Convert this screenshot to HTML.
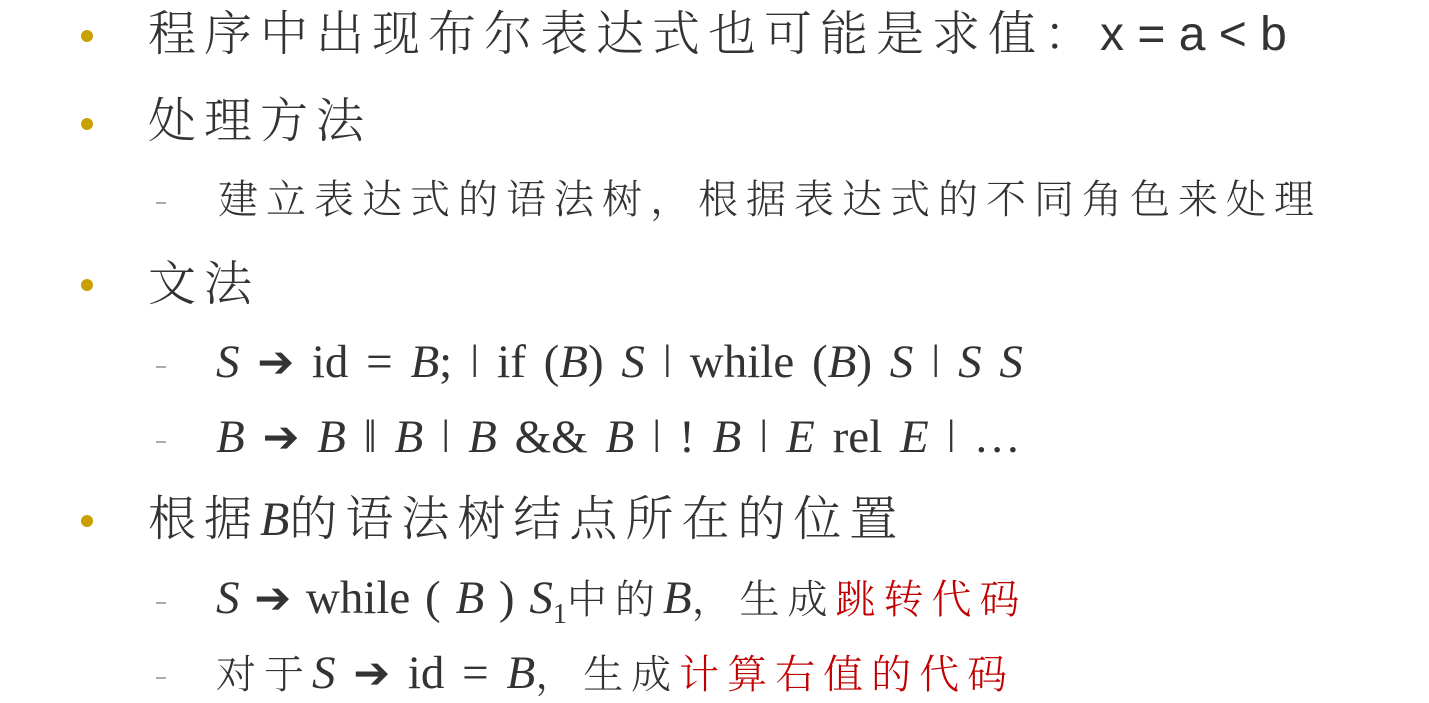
<!DOCTYPE html>
<html><head><meta charset="utf-8"><style>
body{margin:0;width:1429px;height:703px;background:#fff;overflow:hidden;color:#333;font-family:"Liberation Serif","Noto Serif CJK SC",serif;}
.l{position:absolute;white-space:nowrap;line-height:1;}
.b{position:absolute;width:12px;height:12px;border-radius:50%;background:#c9a000;}
.d{position:absolute;width:10px;height:2px;background:#aaa;}
.m{font-size:48px;letter-spacing:8px;font-weight:300;}
.s{font-size:40px;letter-spacing:8px;font-weight:300;}
.e{font-size:47px;letter-spacing:0;word-spacing:6px;}
i{font-style:italic}
.r{color:#c00000}
.a{font-family:"DejaVu Sans",sans-serif;font-weight:bold;font-size:44px;}
.sub{font-size:28px;vertical-align:-10px;}
</style></head><body>
<div class="b" style="left:81px;top:30px"></div>
<div class="l m" style="left:148px;top:11px">程序中出现布尔表达式也可能是求值：<span style="font-family:'Liberation Sans',sans-serif;letter-spacing:0;font-size:48px">x = a &lt; b</span></div>
<div class="b" style="left:81px;top:118px"></div>
<div class="l m" style="left:148px;top:98px">处理方法</div>
<div class="d" style="left:156px;top:202px"></div>
<div class="l s" style="left:218px;top:180px">建立表达式的语法树，根据表达式的不同角色来处理</div>
<div class="b" style="left:81px;top:279px"></div>
<div class="l m" style="left:148px;top:261px">文法</div>
<div class="d" style="left:156px;top:366px"></div>
<div class="l e" style="left:216px;top:339px"><i>S</i> <span class="a">➔</span> id = <i>B</i>; ǀ if (<i>B</i>) <i>S</i> ǀ while (<i>B</i>) <i>S</i> ǀ <i>S</i> <i>S</i></div>
<div class="d" style="left:156px;top:441px"></div>
<div class="l e" style="left:216px;top:414px"><i>B</i> <span class="a">➔</span> <i>B</i> ǁ <i>B</i> ǀ <i>B</i> &amp;&amp; <i>B</i> ǀ ! <i>B</i> ǀ <i>E</i> rel <i>E</i> ǀ …</div>
<div class="b" style="left:81px;top:515px"></div>
<div class="l m" style="left:148px;top:496px;letter-spacing:8px">根据<i style="letter-spacing:0">B</i>的语法树结点所在的位置</div>
<div class="d" style="left:156px;top:602px"></div>
<div class="l e" style="left:216px;top:575px;word-spacing:3px"><i>S</i> <span class="a">➔</span> while ( <i>B</i> ) <i>S</i><span class="sub">1</span><span class="s">中的</span><i>B</i><span class="s">，生成<span class="r">跳转代码</span></span></div>
<div class="d" style="left:156px;top:677px"></div>
<div class="l e" style="left:216px;top:650px"><span class="s">对于</span><i>S</i> <span class="a">➔</span> id = <i>B</i><span class="s">，生成<span class="r">计算右值的代码</span></span></div>
</body></html>
